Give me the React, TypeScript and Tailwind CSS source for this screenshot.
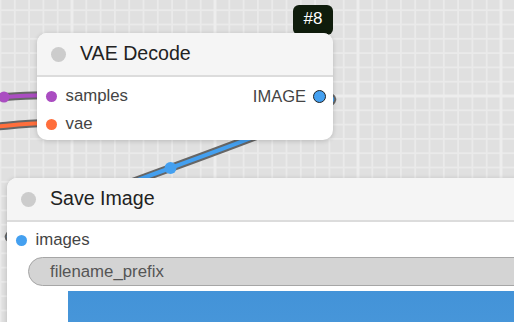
import React from "react";

const minor = Array.from({ length: 10 }, (_, i) => i * 14.3);

function Grid() {
  return (
    <svg className="absolute inset-0" width="514" height="322">
      <defs>
        <pattern
          id="grid"
          width="143"
          height="143"
          patternUnits="userSpaceOnUse"
          patternTransform="translate(72 96)"
        >
          <rect width="143" height="143" fill="#e0e0e0" />
          {minor.map((p) => (
            <React.Fragment key={p}>
              <rect x={p - 0.9} y="0" width="1.8" height="143" fill="#eaeaea" />
              <rect x="0" y={p - 0.9} width="143" height="1.8" fill="#eaeaea" />
            </React.Fragment>
          ))}
          <rect x="-1.5" y="0" width="3" height="143" fill="#ededed" />
          <rect x="141.5" y="0" width="3" height="143" fill="#ededed" />
          <rect x="0" y="-1.5" width="143" height="3" fill="#ededed" />
          <rect x="0" y="141.5" width="143" height="3" fill="#ededed" />
        </pattern>
      </defs>
      <rect width="514" height="322" fill="url(#grid)" />
      {/* purple link */}
      <path d="M -20 98.5 C 5 97.5, 25 94.5, 51 95.5" fill="none" stroke="#666" strokeWidth="8" />
      <path d="M -20 98.5 C 5 97.5, 25 94.5, 51 95.5" fill="none" stroke="#aa4dc1" strokeWidth="4" />
      <circle cx="4" cy="97" r="5.5" fill="#aa4dc1" />
      {/* orange link */}
      <path d="M -20 128 C 5 126.5, 25 122.5, 51 123" fill="none" stroke="#666" strokeWidth="8" />
      <path d="M -20 128 C 5 126.5, 25 122.5, 51 123" fill="none" stroke="#ff6e3c" strokeWidth="4" />
      {/* blue link */}
      <path d="M 320 96 C 415 96, -74 240, 21 240" fill="none" stroke="#666" strokeWidth="8" />
      <path d="M 320 96 C 415 96, -74 240, 21 240" fill="none" stroke="#44a0f0" strokeWidth="4" />
      <circle cx="170.5" cy="168" r="6" fill="#44a0f0" />
    </svg>
  );
}

const font = { fontFamily: '"Liberation Sans", Arial, sans-serif' };

export default function App() {
  return (
    <div
      className="relative w-[514px] h-[322px] overflow-hidden bg-[#e0e0e0]"
      style={font}
    >
      <Grid />

      {/* badge */}
      <div className="absolute left-[293px] top-[5px] w-[40px] h-[30px] rounded-[6px] bg-[#0f1c0c] text-white text-[17px] flex justify-center pt-[4px] leading-[20px]">
        #8
      </div>

      {/* VAE Decode node */}
      <div className="absolute left-[37px] top-[33px] w-[296px] h-[107px] rounded-[10px] bg-white shadow-[0_1px_5px_rgba(0,0,0,0.18)] overflow-hidden flex flex-col">
        <div className="h-[44px] bg-[#f5f5f5] border-b-2 border-[#dcdcdc] flex items-center pl-[14px] gap-[14px] shrink-0">
          <div className="w-[15px] h-[15px] rounded-full bg-[#cccccc]" />
          <span className="text-[19.6px] text-[#222]">VAE Decode</span>
        </div>
        <div className="flex flex-col pt-[5px]">
          <div className="h-[28px] flex items-center">
            <div className="ml-[8.5px] w-[11px] h-[11px] rounded-full bg-[#aa4dc1]" />
            <span className="ml-[9px] text-[16.8px] text-[#444]">samples</span>
            <span className="ml-auto text-[16.5px] text-[#444]">IMAGE</span>
            <div className="ml-[7px] mr-[7px] w-[13px] h-[13px] rounded-full bg-[#44a0f0] border-[1.5px] border-[#222]" />
          </div>
          <div className="h-[28px] flex items-center">
            <div className="ml-[8.5px] w-[11px] h-[11px] rounded-full bg-[#ff6e3c]" />
            <span className="ml-[9px] text-[16.8px] text-[#444]">vae</span>
          </div>
        </div>
      </div>

      {/* Save Image node */}
      <div className="absolute left-[7px] top-[178px] w-[560px] h-[200px] rounded-[10px] bg-white shadow-[0_1px_5px_rgba(0,0,0,0.18)] overflow-hidden flex flex-col">
        <div className="h-[44px] bg-[#f5f5f5] border-b-2 border-[#dcdcdc] flex items-center pl-[14px] gap-[14px] shrink-0">
          <div className="w-[15px] h-[15px] rounded-full bg-[#cccccc]" />
          <span className="text-[19.6px] text-[#222]">Save Image</span>
        </div>
        <div className="flex flex-col pt-[4px]">
          <div className="h-[28px] flex items-center">
            <div className="ml-[8.5px] w-[11px] h-[11px] rounded-full bg-[#44a0f0]" />
            <span className="ml-[9px] text-[16.8px] text-[#444]">images</span>
          </div>
          <div className="mt-[3px] ml-[21px] mr-[21px] h-[29px] rounded-full bg-[#d4d4d4] border border-[#a6a6a6] flex items-center pl-[21px]">
            <span className="text-[16.8px] text-[#555]">filename_prefix</span>
          </div>
          <div className="mt-[5px] ml-[61px] h-[60px] bg-[linear-gradient(180deg,#4393d8,#4a98da)]" />
        </div>
      </div>
    </div>
  );
}
